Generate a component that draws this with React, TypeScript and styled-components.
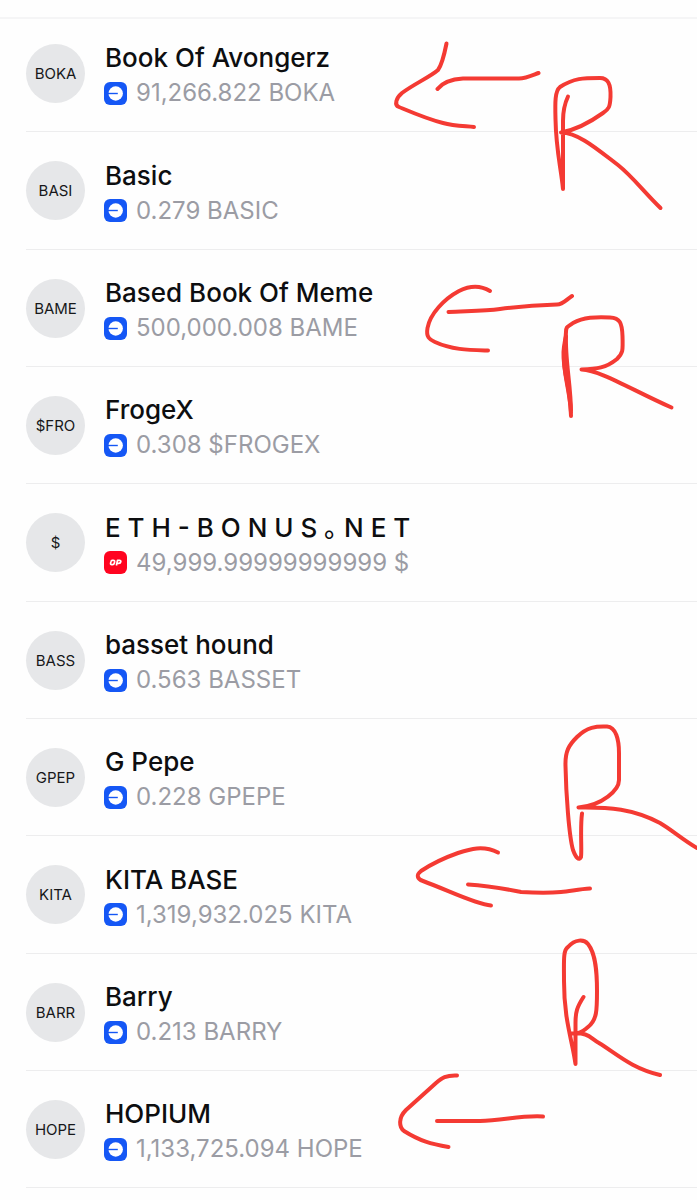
import React from "react";
import styled, { createGlobalStyle } from "styled-components";

const GlobalStyle = createGlobalStyle`
  *, *::before, *::after {
    box-sizing: border-box;
  }
  body {
    margin: 0;
    background: #fefefe;
    font-family: Inter, "Noto Sans CJK SC", sans-serif;
  }
`;

const Page = styled.main`
  position: relative;
  padding-top: 17px;
  overflow: hidden;
`;

const TokenList = styled.ul`
  list-style: none;
  margin: 0;
  padding: 0 0 0 26px;
  border-top: 2px solid #f5f5f6;
`;

const TokenRow = styled.li`
  display: flex;
  align-items: center;
  gap: 19px;
  height: 117px;
  border-bottom: 1px solid #ededee;

  &:first-child {
    height: 113px;
    padding-bottom: 4px;
  }
  &:nth-child(3n + 2) {
    height: 118px;
  }
`;

const Avatar = styled.div`
  flex: none;
  display: grid;
  place-items: center;
  width: 59px;
  height: 59px;
  border-radius: 50%;
  background: #e6e7e9;
  color: #17181a;
  font-size: 15px;
`;

const Details = styled.div`
  min-width: 0;
  padding-top: 4px;
`;

const Name = styled.h2`
  margin: 0;
  padding-left: 1px;
  color: #0d0e10;
  font-size: 26px;
  font-weight: 500;
  line-height: 36px;
  white-space: pre;
`;

const Balance = styled.p`
  display: flex;
  align-items: center;
  gap: 9px;
  margin: 0;
  color: #9b9ca4;
  font-size: 24px;
  font-weight: 400;
  line-height: 34px;
  white-space: nowrap;
`;

const Badge = styled.svg`
  flex: none;
  width: 23px;
  height: 23px;
`;

const Markup = styled.svg`
  position: absolute;
  top: 0;
  left: 0;
  width: 100%;
  pointer-events: none;
  fill: none;
  stroke: #f43a33;
  stroke-width: 4;
  stroke-linecap: round;
  stroke-linejoin: round;
`;

type Network = "base" | "optimism";

function NetworkBadge({ network }: { network: Network }) {
  if (network === "optimism") {
    return (
      <Badge viewBox="0 0 23 23" role="img" aria-label="Optimism">
        <rect width="23" height="23" rx="6" fill="#ff0420" />
        <g fill="none" stroke="#fff" strokeWidth="1.7" strokeLinejoin="round">
          <path d="M8.2 9.4h1.2q1.500 0 1.2 1.5l-.3 1.3q-.3 1.5-1.8 1.5h-.8q-1.4 0-1.1-1.5l.3-1.3q.3-1.5 1.3-1.5z" />
          <path d="M12.4 14.5l1.1-5.1h2q1.6 0 1.3 1.4-.3 1.5-1.9 1.5h-1.8" />
        </g>
      </Badge>
    );
  }
  return (
    <Badge viewBox="0 0 23 23" role="img" aria-label="Base">
      <rect width="23" height="23" rx="6" fill="#1557f5" />
      <circle cx="11.7" cy="11.5" r="7.2" fill="#fff" />
      <path d="M4 11.5h9.8" stroke="#1557f5" strokeWidth="1.4" />
    </Badge>
  );
}

interface Token {
  short: string;
  name: string;
  balance: string;
  network: Network;
}

const tokens: Token[] = [
  { short: "BOKA", name: "Book Of Avongerz", balance: "91,266.822 BOKA", network: "base" },
  { short: "BASI", name: "Basic", balance: "0.279 BASIC", network: "base" },
  { short: "BAME", name: "Based Book Of Meme", balance: "500,000.008 BAME", network: "base" },
  { short: "$FRO", name: "FrogeX", balance: "0.308 $FROGEX", network: "base" },
  { short: "$", name: "E T H - B O N U S ｡ N E T", balance: "49,999.99999999999 $", network: "optimism" },
  { short: "BASS", name: "basset hound", balance: "0.563 BASSET", network: "base" },
  { short: "GPEP", name: "G Pepe", balance: "0.228 GPEPE", network: "base" },
  { short: "KITA", name: "KITA BASE", balance: "1,319,932.025 KITA", network: "base" },
  { short: "BARR", name: "Barry", balance: "0.213 BARRY", network: "base" },
  { short: "HOPE", name: "HOPIUM", balance: "1,133,725.094 HOPE", network: "base" },
];

const strokes = [
  // first arrow and mark
  "M446.5 43.5C444 56 441 66 438 70C430 77 414 84 402 93C396 98 394 105 399 107C411 112 427 119 443 123C454 126 465 126 474 127",
  "M437.5 89C443 82 454 79 463 78.5H519C526 78.500 533 75 538.500 73",
  "M568 96.500C564 105 563 112 563 121V189C561 168 556 150 555.500 119C555 102 555 91 560 87C574 78 583 78 600 78C608 78 611 84 610.500 97C610 107 609 109 603 113C589 123 576 130 561 132.500C579 133 597 149 618 165C632 176 644 192 660.500 208",
  // second arrow and mark
  "M490 291C480 285 469 286 459 291C444 299 430 314 427.500 328C426 337 429 339 435 342C452 350 470 350 488 350.500",
  "M448.500 312C465 311 484 311 500 309C522 306 538 305 557 304.500C563 304.500 567 299 572 296",
  "M571 416C570 382 563 375 563.500 352C564 343 566 338 566 332C566 326 568 327 573 323C584 317 595 317 610 317.500C620 318 622 323 622.500 336C623 351 623 353 617 359C606 368 597 369 581.500 369.500C600 370 632 390 671.500 407.500",
  // third arrow and mark
  "M498 852.500C483 845 470 849 458 853C441 859 430 865 421 871C416 875 417 879 423 881C450 891 475 904 491 905.500",
  "M468 884.500C492 886 506 889 521 892C538 893 550 893 561 892C571 891 580 889 590 888.500",
  "M582 813.500C580 829 582 849 581 857C579 861 576 858 573 850C569 836 566 793 565.500 766C565 751 569 745 577 737C587 727 596 726 607 726.500C616 727 619 740 619 753V780C619 790 603 805 578.500 807.500C610 807 633 809 660 823C672 830 683 840 697 848",
  // fourth arrow and mark
  "M583.500 997C577 1007 575.500 1012 575.500 1023V1064C572 1039 564 1020 564 981C564 961 563 950 568 947C575 939 584 939 588 944C596 954 597 973 597 991C597 1010 597 1020 588 1027C581 1033 578 1034 571 1033.500C589 1032 590 1038 599 1043C617 1054 631 1068 660 1075",
  "M457 1075.500C446 1075 442 1078 436 1083L406 1110C398 1118 399 1127 404 1131C420 1141 431 1144 448.500 1147",
  "M437 1121H480C502 1121 521 1115 543 1116.500",
];

// Pen pressure widens the stem of the second mark
const heavyStroke = "M566 336C565 360 571 386 571 412C569 385 563 375 564 352Z";

export default function App() {
  return (
    <>
      <GlobalStyle />
      <Page>
        <TokenList>
          {tokens.map((token) => (
            <TokenRow key={token.short}>
              <Avatar aria-hidden="true">{token.short}</Avatar>
              <Details>
                <Name>{token.name}</Name>
                <Balance>
                  <NetworkBadge network={token.network} />
                  {token.balance}
                </Balance>
              </Details>
            </TokenRow>
          ))}
        </TokenList>
        <Markup viewBox="0 0 697 1188" aria-hidden="true">
          {strokes.map((d) => (
            <path key={d} d={d} />
          ))}
          <path d={heavyStroke} fill="#f43a33" />
        </Markup>
      </Page>
    </>
  );
}
